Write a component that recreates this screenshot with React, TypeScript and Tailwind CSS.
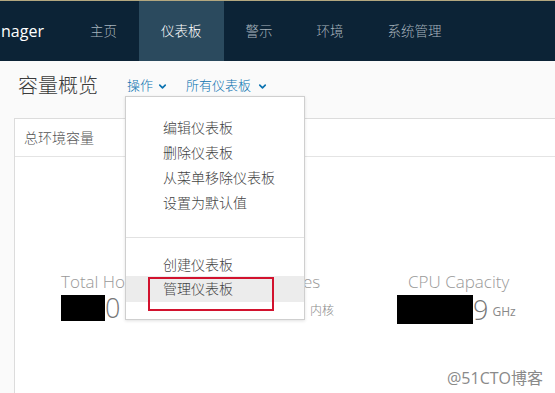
import React from "react";
import { ChevronDown } from "lucide-react";

const navItems = ["主页", "仪表板", "警示", "环境", "系统管理"];

const menuTop = ["编辑仪表板", "删除仪表板", "从菜单移除仪表板", "设置为默认值"];

export default function App() {
  return (
    <div className="relative h-[393px] w-[555px] overflow-hidden bg-[#fafafa] font-['Open_Sans','Noto_Sans_CJK_SC',sans-serif]">
      <header className="flex h-[61px] border-t border-[#b3a77f] bg-[#0c2336]">
        <div className="flex w-[68px] items-center pl-[1px] text-[16px] text-white">
          nager
        </div>
        {navItems.map((item) => (
          <div
            key={item}
            className={
              item === "仪表板"
                ? "flex items-center bg-[#2b4a5e] px-[22px] text-[13.5px] font-light text-white"
                : "flex items-center px-[22px] text-[13.5px] font-light text-[#a7b3bd]"
            }
          >
            {item}
          </div>
        ))}
      </header>

      <div className="flex h-[50px] items-center pl-[18px]">
        <h1 className="text-[20px] font-light text-[#3a3a3a]">容量概览</h1>
        <button className="ml-[29px] flex items-center text-[13px] font-light text-[#0a72b0]">
          操作
          <ChevronDown size={11} strokeWidth={3.5} className="ml-[4px]" />
        </button>
        <button className="ml-[18px] flex items-center text-[13px] font-light text-[#0a72b0]">
          所有仪表板
          <ChevronDown size={11} strokeWidth={3.5} className="ml-[6px]" />
        </button>
      </div>

      <section className="ml-[14px] mr-[-20px] mt-[7px] h-[300px] border border-[#dcdcdc] bg-white">
        <div className="flex h-[38px] items-center border-b border-[#e4e4e4] pl-[9px] text-[14px] font-light text-[#555]">
          总环境容量
        </div>
        <div className="flex pl-[46px] pt-[114px]">
          <div className="w-[173px]">
            <p className="text-[17px] font-light leading-[22px] text-[#999]">Total Hosts</p>
            <div className="mt-[2px] flex items-center">
              <span className="h-[26px] w-[44px] bg-black" />
              <span className="text-[27px] font-light leading-[26px] text-[#777]">0</span>
            </div>
          </div>
          <div className="w-[163px]">
            <p className="text-[17px] font-light leading-[22px] text-[#999]">Total Cores</p>
            <div className="mt-[2px] flex items-center">
              <span className="inline-block w-[70px] text-right text-[27px] font-light leading-[26px] text-[#777]">
                48
              </span>
              <span className="ml-[6px] mt-[6px] text-[12px] font-light text-[#888]">内核</span>
            </div>
          </div>
          <div>
            <p className="ml-[11px] text-[17px] font-light leading-[22px] text-[#999]">
              CPU Capacity
            </p>
            <div className="mt-[2px] flex items-center">
              <span className="h-[29px] w-[76px] bg-black" />
              <span className="text-[27px] font-light leading-[26px] text-[#777]">9</span>
              <span className="ml-[4px] mt-[4px] text-[12px] text-[#888]">GHz</span>
            </div>
          </div>
        </div>
      </section>

      <div className="absolute left-[125px] top-[96px] w-[180px] border border-[#cfcfcf] bg-white pb-[17px] pt-[18px] shadow-[0_1px_3px_rgba(0,0,0,0.12)]">
        {menuTop.map((item) => (
          <div key={item} className="h-[25px] pl-[37px] text-[14px] font-light leading-[25px] text-[#444]">
            {item}
          </div>
        ))}
        <div className="mt-[22px] h-px bg-[#e2e2e2]" />
        <div className="mt-[16px] h-[22px] pl-[37px] text-[14px] font-light leading-[22px] text-[#444]">
          创建仪表板
        </div>
        <div className="h-[26px] bg-[#ececec] pl-[37px] text-[14px] font-light leading-[26px] text-[#444]">
          管理仪表板
        </div>
      </div>

      <div className="absolute left-[148px] top-[277px] h-[34px] w-[126px] border-2 border-[#d2122e]" />

      <div className="absolute left-[447px] top-[366px] text-[16px] text-[#8a8a8a]">@51CTO博客</div>
    </div>
  );
}
